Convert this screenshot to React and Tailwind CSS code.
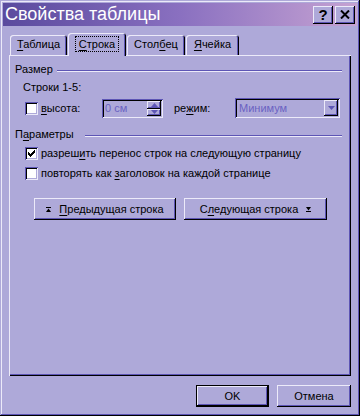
import React from 'react';

// Win2000-style bevels, lavender scheme
const raised =
  'shadow-[inset_-1px_-1px_#000,inset_1px_1px_#eceaf9,inset_-2px_-2px_#5d55b5,inset_2px_2px_#aea9d9]';
const sunken =
  'shadow-[inset_1px_1px_#5d55b5,inset_-1px_-1px_#eceaf9,inset_2px_2px_#000,inset_-2px_-2px_#aea9d9]';

const U = ({ children }) => <span className="underline underline-offset-2">{children}</span>;

const Checkbox = ({ checked }) => (
  <div className={`w-[13px] h-[13px] shrink-0 bg-white flex items-center justify-center ${sunken}`}>
    {checked && (
      <svg width="7" height="7" viewBox="0 0 7 7">
        <path d="M0 2h1v1h1v1h1V3h1V2h1V1h1V0h1v3H6v1H5v1H4v1H3v1H2V6H1V5H0z" fill="#000" />
      </svg>
    )}
  </div>
);

const Tab = ({ children, active, w }) => (
  <div
    className={`ml-[1px] flex items-center justify-center rounded-t-[3px] bg-[#aea9d9] shadow-[inset_1px_1px_#eceaf9,inset_-1px_0_#000,inset_-2px_0_#5d55b5] ${w} ${
      active ? 'relative z-10 h-[23px] -mb-[1px] pb-[2px]' : 'h-[20px] pb-[1px]'
    }`}
  >
    {active ? (
      <span className="border border-dotted border-black px-[3px] h-[16px] leading-[14px]">{children}</span>
    ) : (
      <span>{children}</span>
    )}
  </div>
);

const GroupTitle = ({ label, w }) => (
  <div className="flex items-start h-[13px] pl-[6px] pr-[9px]">
    <div className={`${w} leading-[13px]`}>{label}</div>
    <div className="flex-1 mt-[7px] h-[2px] border-t border-t-[#5d55b5] border-b border-b-[#eceaf9]" />
  </div>
);

const ArrowUp = () => (
  <svg width="5" height="5" viewBox="0 0 5 5">
    <rect x="0" y="0" width="5" height="1" fill="#000" />
    <path d="M2.5 1.5L5 5H0z" fill="#000" />
  </svg>
);

const ArrowDown = () => (
  <svg width="5" height="5" viewBox="0 0 5 5">
    <path d="M0 0h5L2.5 3.5z" fill="#000" />
    <rect x="0" y="4" width="5" height="1" fill="#000" />
  </svg>
);

const Tri = ({ dir = 'down', color = '#5d55b5' }) => (
  <svg width="7" height="4" viewBox="0 0 7 4">
    <path d={dir === 'down' ? 'M0 0h7L3.5 4z' : 'M3.5 0L7 4H0z'} fill={color} />
  </svg>
);

export default function App() {
  return (
    <div
      className="w-[360px] h-[416px] bg-[#aea9d9] text-black text-[11px] flex flex-col pt-[3px] shadow-[inset_-1px_-1px_#000,inset_1px_1px_#aea9d9,inset_-2px_-2px_#5d55b5,inset_2px_2px_#eceaf9]"
      style={{ fontFamily: '"Liberation Sans", Arial, sans-serif' }}
    >
      {/* title bar */}
      <div className="mx-[3px] h-[23px] flex items-center bg-gradient-to-r from-[#5a4a9e] via-[#8a70c0] to-[#c6a2d2]">
        <div className="pl-[2px] flex-1 text-white text-[18px] leading-[23px]">Свойства таблицы</div>
        <div className="flex gap-[2px] pr-[2px]">
          <div className={`w-[20px] h-[18px] bg-[#aea9d9] flex items-center justify-center font-bold text-[15px] leading-none ${raised}`}>
            ?
          </div>
          <div className={`w-[20px] h-[18px] bg-[#aea9d9] flex items-center justify-center ${raised}`}>
            <svg width="10" height="9" viewBox="0 0 10 9">
              <path d="M1 0.5l8 8M9 0.5l-8 8" stroke="#000" strokeWidth="2" />
            </svg>
          </div>
        </div>
      </div>

      <div className="px-[9px] mt-[7px] flex flex-col">
        {/* tabs */}
        <div className="h-[22px] flex items-end">
          <Tab w="w-[57px]">
            <U>Т</U>аблица
          </Tab>
          <Tab w="w-[58px]" active>
            <U>С</U>трока
          </Tab>
          <Tab w="w-[58px]">
            Стол<U>б</U>ец
          </Tab>
          <Tab w="w-[53px]">
            <U>Я</U>чейка
          </Tab>
        </div>

        {/* tab page */}
        <div className="h-[321px] flex flex-col shadow-[inset_1px_1px_#eceaf9,inset_-1px_-1px_#000,inset_-2px_-2px_#5d55b5]">
          <div className="mt-[8px]">
            <GroupTitle label="Размер" w="w-[42px]" />
          </div>
          <div className="mt-[5px] pl-[14px] h-[13px] leading-[13px]">Строки 1-5:</div>

          <div className="mt-[4px] h-[20px] flex items-center">
            <div className="ml-[16px]">
              <Checkbox />
            </div>
            <div className="ml-[3px] w-[61px]">
              <U>в</U>ысота:
            </div>
            <div className={`w-[61px] h-[19px] flex items-center justify-between pl-[3px] pr-[2px] ${sunken}`}>
              <span className="text-[#6a62c2]">0 см</span>
              <div className="flex flex-col">
                <div className={`w-[14px] h-[8px] flex items-center justify-center ${raised}`}>
                  <Tri dir="up" />
                </div>
                <div className={`w-[14px] h-[7px] flex items-center justify-center ${raised}`}>
                  <Tri />
                </div>
              </div>
            </div>
            <div className="ml-[11px] w-[61px]">
              ре<U>ж</U>им:
            </div>
            <div className={`w-[105px] h-[20px] flex items-center justify-between pl-[4px] pr-[2px] ${sunken}`}>
              <span className="text-[#6a62c2]">Минимум</span>
              <div className={`w-[14px] h-[16px] flex items-center justify-center ${raised}`}>
                <Tri />
              </div>
            </div>
          </div>

          <div className="mt-[10px]">
            <GroupTitle label={<>П<U>а</U>раметры</>} w="w-[70px]" />
          </div>

          <div className="mt-[6px] h-[13px] flex items-center">
            <div className="ml-[16px]">
              <Checkbox checked />
            </div>
            <div className="ml-[3px]">
              разреш<U>и</U>ть перенос строк на следующую страницу
            </div>
          </div>
          <div className="mt-[7px] h-[13px] flex items-center">
            <div className="ml-[16px]">
              <Checkbox />
            </div>
            <div className="ml-[3px]">
              повторять как <U>з</U>аголовок на каждой странице
            </div>
          </div>

          <div className="mt-[18px] pl-[25px] flex gap-[8px]">
            <div className={`w-[142px] h-[22px] flex items-center justify-center gap-[8px] ${raised}`}>
              <ArrowUp />
              <span>
                <U>П</U>редыдущая строка
              </span>
            </div>
            <div className={`w-[143px] h-[22px] flex items-center justify-center gap-[8px] ${raised}`}>
              <span>
                С<U>л</U>едующая строка
              </span>
              <ArrowDown />
            </div>
          </div>
        </div>

        {/* dialog buttons */}
        <div className="mt-[9px] flex justify-end gap-[8px]">
          <div className="w-[73px] h-[22px] border border-black">
            <div className={`w-full h-full flex items-center justify-center ${raised}`}>OK</div>
          </div>
          <div className={`w-[74px] h-[22px] flex items-center justify-center ${raised}`}>Отмена</div>
        </div>
      </div>
    </div>
  );
}
